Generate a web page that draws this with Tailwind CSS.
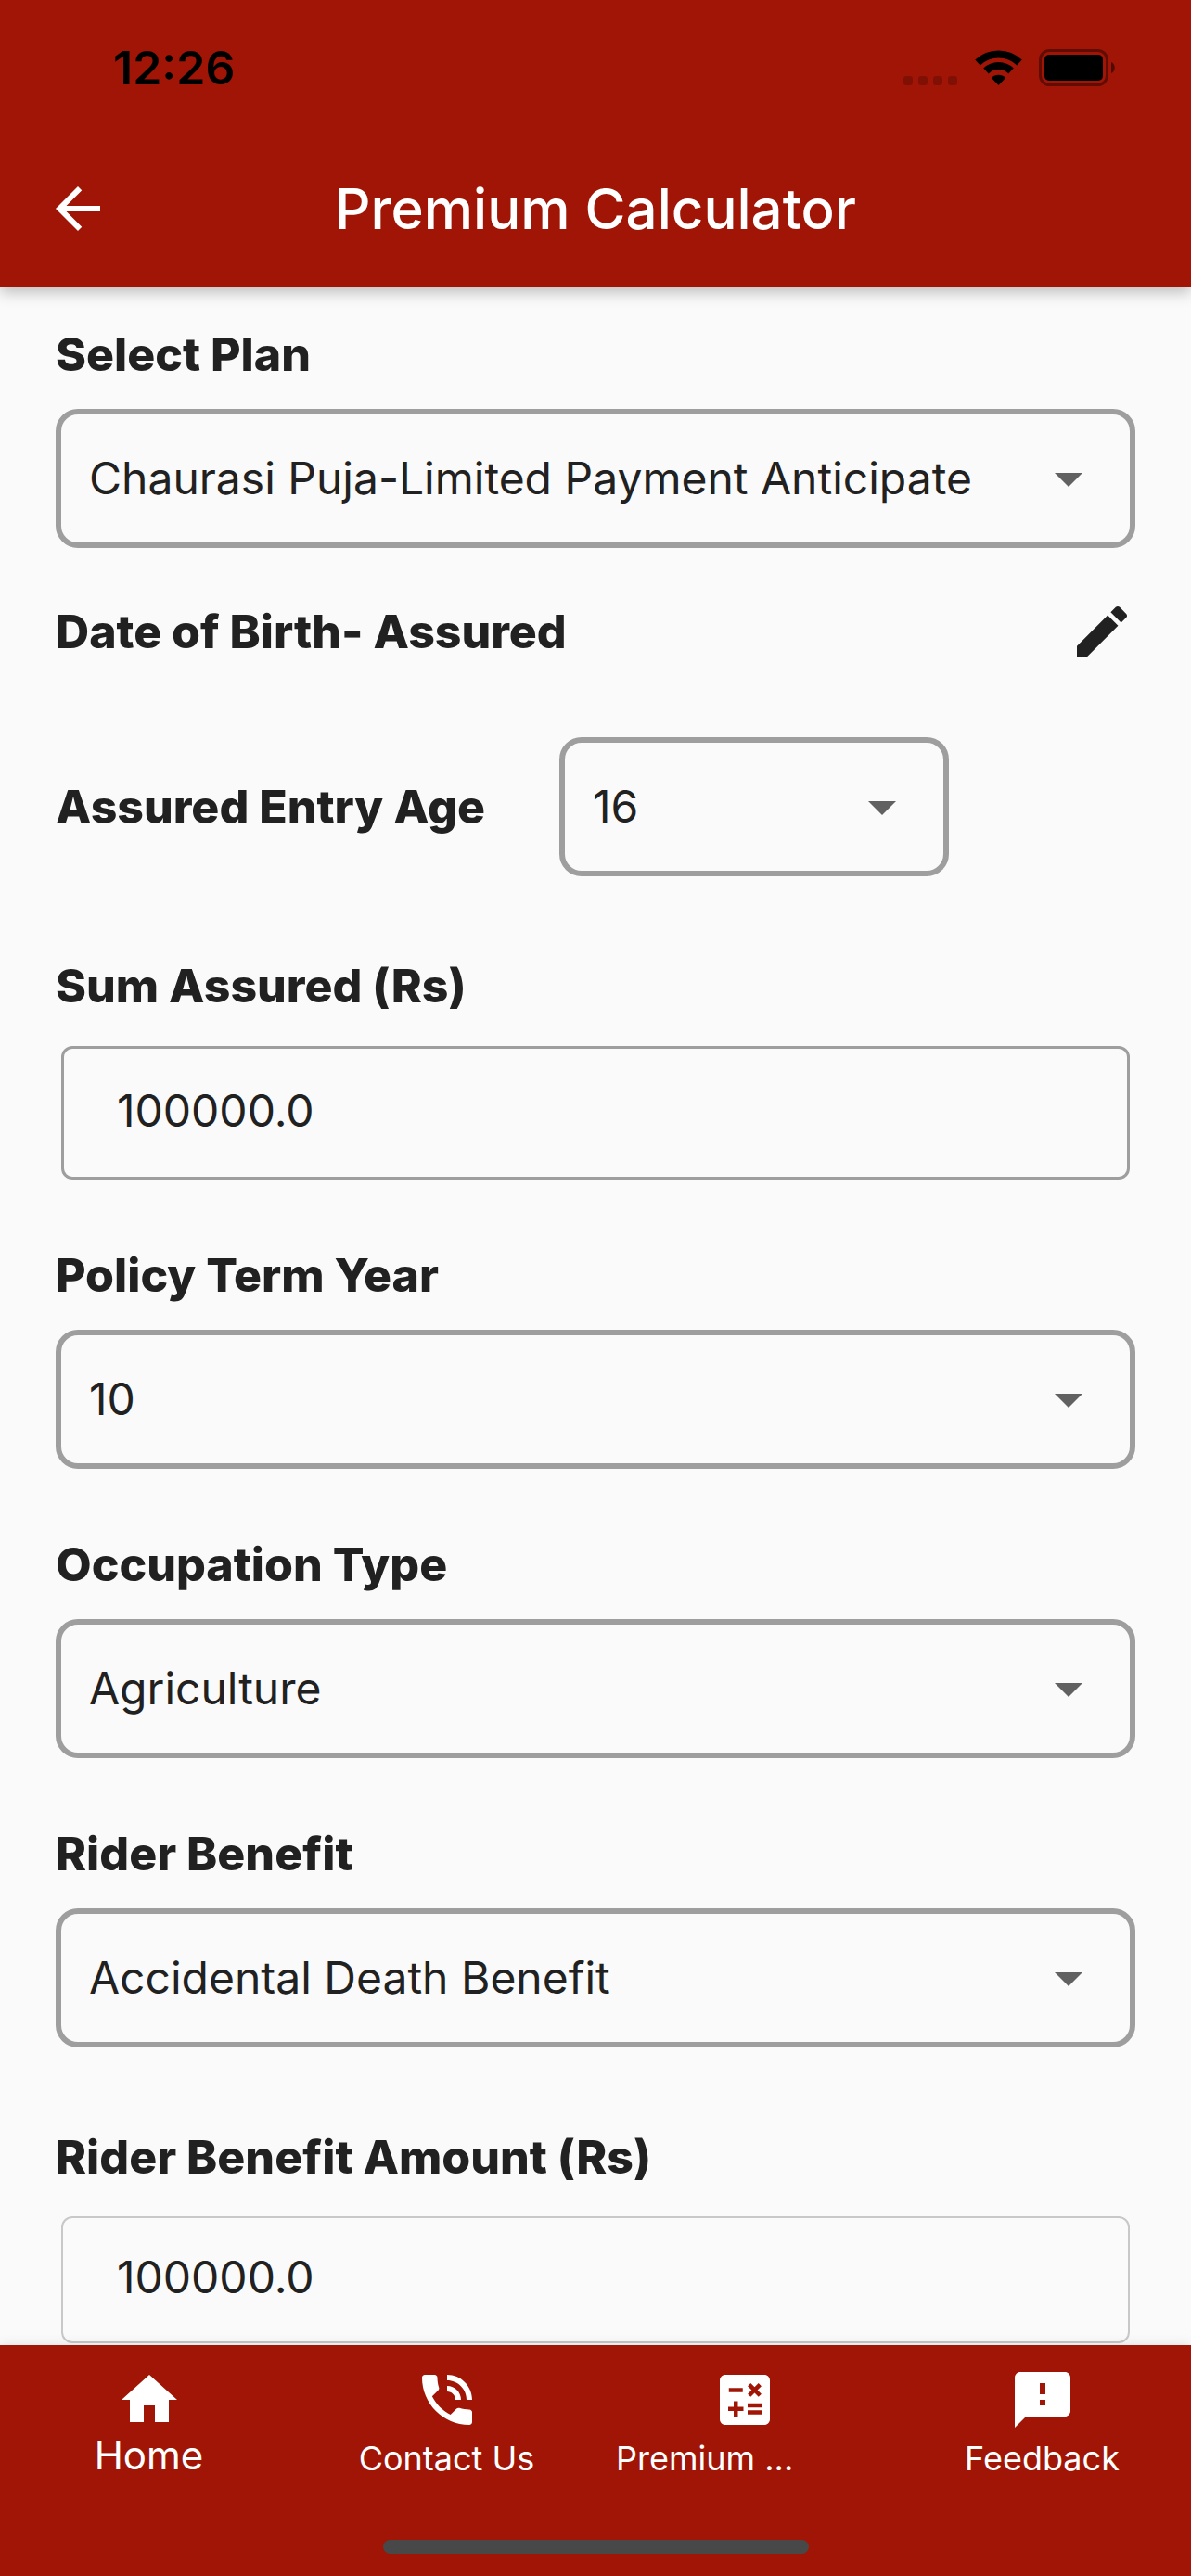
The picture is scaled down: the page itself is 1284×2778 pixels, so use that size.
<!DOCTYPE html>
<html lang="en">
<head>
  <meta charset="UTF-8" />
  <meta name="viewport" content="width=device-width, initial-scale=1" />
  <title>Premium Calculator</title>
  <script src="https://cdn.jsdelivr.net/npm/@tailwindcss/browser@4"></script>
</head>
<body class="min-h-screen flex flex-col bg-[#fafafa] text-[#212121] text-[48px] leading-[60px] font-[Inter,Roboto,sans-serif]">

  <header class="relative bg-[#a01505] shadow-[0_6px_15px_rgba(0,0,0,0.25)]">
    <!-- status bar -->
    <div class="flex items-center justify-between h-[141px] pt-1 pl-[122px] pr-[81px] text-black">
      <span class="text-[50px] font-semibold">12:26</span>
      <div class="flex items-center">
        <svg class="w-[58px] h-[38px]" viewBox="0 0 58 38" fill="#000" fill-opacity="0.2" aria-hidden="true">
          <rect x="0" y="28" width="10" height="10" rx="3" />
          <rect x="16" y="28" width="10" height="10" rx="3" />
          <rect x="32" y="28" width="10" height="10" rx="3" />
          <rect x="48" y="28" width="10" height="10" rx="3" />
        </svg>
        <svg class="w-[51px] h-[38px] ml-[19px]" viewBox="0 0 51 38" aria-hidden="true">
          <path fill="none" stroke="#000" stroke-width="8" d="M3 13.500a32.500 32.500 0 0 1 45 0M12 22.500a19.500 19.500 0 0 1 27 0" />
          <path d="M25.500 38l-7.700-8a11 11 0 0 1 15.400 0z" />
        </svg>
        <svg class="w-[83px] h-[40px] ml-[18px]" viewBox="0 0 83 40" aria-hidden="true">
          <rect x="1.500" y="1.500" width="72" height="37" rx="10" fill="none" stroke="#000" stroke-opacity="0.4" stroke-width="3" />
          <rect x="6" y="6" width="63" height="28" rx="5" />
          <path fill-opacity="0.5" d="M78 14c5 2 5 10 0 12z" />
        </svg>
      </div>
    </div>
    <!-- app bar -->
    <div class="grid grid-cols-[1fr_auto_1fr] items-center h-[168px] px-12 text-white">
      <button type="button" class="w-[72px] h-[72px]" aria-label="Back">
        <svg class="w-[72px] h-[72px]" viewBox="0 0 24 24" fill="currentColor"><path d="M20 11H7.830l5.590-5.590L12 4l-8 8 8 8 1.410-1.410L7.830 13H20v-2z" /></svg>
      </button>
      <h1 class="text-[60px] font-medium">Premium Calculator</h1>
    </div>
  </header>

  <main class="flex-1 px-[60px] pt-[43px]">
    <form>
      <label for="plan" class="block text-[50px] font-extrabold">Select Plan</label>
      <div class="relative mt-[29px]">
        <select id="plan" class="appearance-none block w-full h-[150px] px-[30px] border-6 border-[#9e9e9e] rounded-3xl">
          <option>Chaurasi Puja-Limited Payment Anticipate</option>
        </select>
        <svg class="absolute right-9 top-[39px] w-[72px] h-[72px] pointer-events-none" viewBox="0 0 24 24" fill="#616161"><path d="M7 10l5 5 5-5z" /></svg>
      </div>

      <div class="flex items-center justify-between mt-[54px]">
        <span class="text-[50px] font-extrabold">Date of Birth- Assured</span>
        <button type="button" class="w-[72px] h-[72px]" aria-label="Edit date of birth">
          <svg class="w-[72px] h-[72px]" viewBox="0 0 24 24" fill="currentColor"><path d="M3 17.250V21h3.750L17.810 9.940l-3.750-3.750L3 17.250zM20.710 7.040c.390-.390.390-1.020 0-1.410l-2.340-2.340c-.390-.390-1.020-.390-1.410 0l-1.830 1.830 3.750 3.750 1.830-1.830z" /></svg>
        </button>
      </div>

      <div class="flex items-center mt-[78px]">
        <label for="age" class="w-[543px] shrink-0 text-[50px] font-extrabold">Assured Entry Age</label>
        <div class="relative w-[420px]">
          <select id="age" class="appearance-none block w-full h-[150px] px-[30px] border-6 border-[#9e9e9e] rounded-3xl">
            <option>16</option>
          </select>
          <svg class="absolute right-9 top-[39px] w-[72px] h-[72px] pointer-events-none" viewBox="0 0 24 24" fill="#616161"><path d="M7 10l5 5 5-5z" /></svg>
        </div>
      </div>

      <label for="sum" class="block mt-[88px] text-[50px] font-extrabold">Sum Assured (Rs)</label>
      <div class="mt-[35px] px-[6px]">
        <input id="sum" type="text" inputmode="decimal" value="100000.0" class="block w-full h-36 px-[57px] pb-[6px] border-3 border-[#9e9e9e] rounded-xl" />
      </div>

      <label for="term" class="block mt-[73px] text-[50px] font-extrabold">Policy Term Year</label>
      <div class="relative mt-[29px]">
        <select id="term" class="appearance-none block w-full h-[150px] px-[30px] border-6 border-[#9e9e9e] rounded-3xl">
          <option>10</option>
        </select>
        <svg class="absolute right-9 top-[39px] w-[72px] h-[72px] pointer-events-none" viewBox="0 0 24 24" fill="#616161"><path d="M7 10l5 5 5-5z" /></svg>
      </div>

      <label for="occupation" class="block mt-[73px] text-[50px] font-extrabold">Occupation Type</label>
      <div class="relative mt-[29px]">
        <select id="occupation" class="appearance-none block w-full h-[150px] px-[30px] border-6 border-[#9e9e9e] rounded-3xl">
          <option>Agriculture</option>
        </select>
        <svg class="absolute right-9 top-[39px] w-[72px] h-[72px] pointer-events-none" viewBox="0 0 24 24" fill="#616161"><path d="M7 10l5 5 5-5z" /></svg>
      </div>

      <label for="rider" class="block mt-[73px] text-[50px] font-extrabold">Rider Benefit</label>
      <div class="relative mt-[29px]">
        <select id="rider" class="appearance-none block w-full h-[150px] px-[30px] border-6 border-[#9e9e9e] rounded-3xl">
          <option>Accidental Death Benefit</option>
        </select>
        <svg class="absolute right-9 top-[39px] w-[72px] h-[72px] pointer-events-none" viewBox="0 0 24 24" fill="#616161"><path d="M7 10l5 5 5-5z" /></svg>
      </div>

      <label for="riderAmount" class="block mt-[88px] text-[50px] font-extrabold">Rider Benefit Amount (Rs)</label>
      <div class="mt-[34px] px-[6px]">
        <input id="riderAmount" type="text" inputmode="decimal" value="100000.0" class="block w-full h-[137px] px-[58px] pb-[6px] border-2 border-[#c8c8c8] rounded-xl" />
      </div>
    </form>
  </main>

  <footer class="relative bg-[#a01505] text-white pt-[23px] pb-6 shadow-[0_0_12px_rgba(0,0,0,0.12)]">
    <nav class="grid grid-cols-4 text-[36px] leading-[54px] text-center">
      <a href="#" class="block">
        <svg class="mx-auto w-[72px] h-[72px]" viewBox="0 0 24 24" fill="currentColor"><path d="M10 20v-6h4v6h5v-8h3L12 3 2 12h3v8z" /></svg>
        <span class="block text-[42px] leading-[48px]">Home</span>
      </a>
      <a href="#" class="block">
        <svg class="mx-auto w-[72px] h-[72px]" viewBox="0 0 24 24" fill="currentColor"><path d="M20 15.500c-1.250 0-2.450-.200-3.570-.570-.350-.110-.740-.030-1.020.240l-2.200 2.200c-2.830-1.440-5.150-3.750-6.590-6.590l2.200-2.210c.280-.260.360-.650.250-1C8.700 6.450 8.500 5.250 8.500 4c0-.550-.450-1-1-1H4c-.550 0-1 .450-1 1 0 9.390 7.610 17 17 17 .550 0 1-.450 1-1v-3.500c0-.550-.450-1-1-1zM19 12h2c0-4.970-4.030-9-9-9v2c3.870 0 7 3.130 7 7zm-4 0h2c0-2.760-2.240-5-5-5v2c1.660 0 3 1.340 3 3z" /></svg>
        Contact Us
      </a>
      <a href="#" class="block">
        <svg class="mx-auto w-[72px] h-[72px]" viewBox="0 0 24 24" fill="currentColor"><path fill-rule="evenodd" d="M19 3H5c-1.100 0-2 .900-2 2v14c0 1.100.900 2 2 2h14c1.100 0 2-.900 2-2V5c0-1.100-.900-2-2-2zM13.030 7.060L14.090 6l1.410 1.410L16.910 6l1.060 1.060-1.410 1.410 1.410 1.410-1.060 1.060-1.410-1.400-1.410 1.410-1.060-1.060 1.410-1.410-1.410-1.420zM6.250 7.720h5v1.500h-5v-1.500zM11.500 16h-2v2H8v-2H6v-1.500h2v-2h1.500v2h2V16zm6.500 1.250h-5v-1.500h5v1.500zm0-2.500h-5v-1.500h5v1.500z" /></svg>
        <span class="block pl-[22px] text-left">Premium ...</span>
      </a>
      <a href="#" class="block">
        <svg class="mx-auto w-[72px] h-[72px]" viewBox="0 0 24 24" fill="currentColor"><path d="M20 2H4c-1.100 0-1.990.900-1.990 2L2 22l4-4h14c1.100 0 2-.900 2-2V4c0-1.100-.900-2-2-2zm-7 12h-2v-2h2v2zm0-4h-2V6h2v4z" /></svg>
        Feedback
      </a>
    </nav>
    <div class="mx-auto mt-[61px] w-[459px] h-[15px] rounded-full bg-[#484848]"></div>
  </footer>

</body>
</html>
